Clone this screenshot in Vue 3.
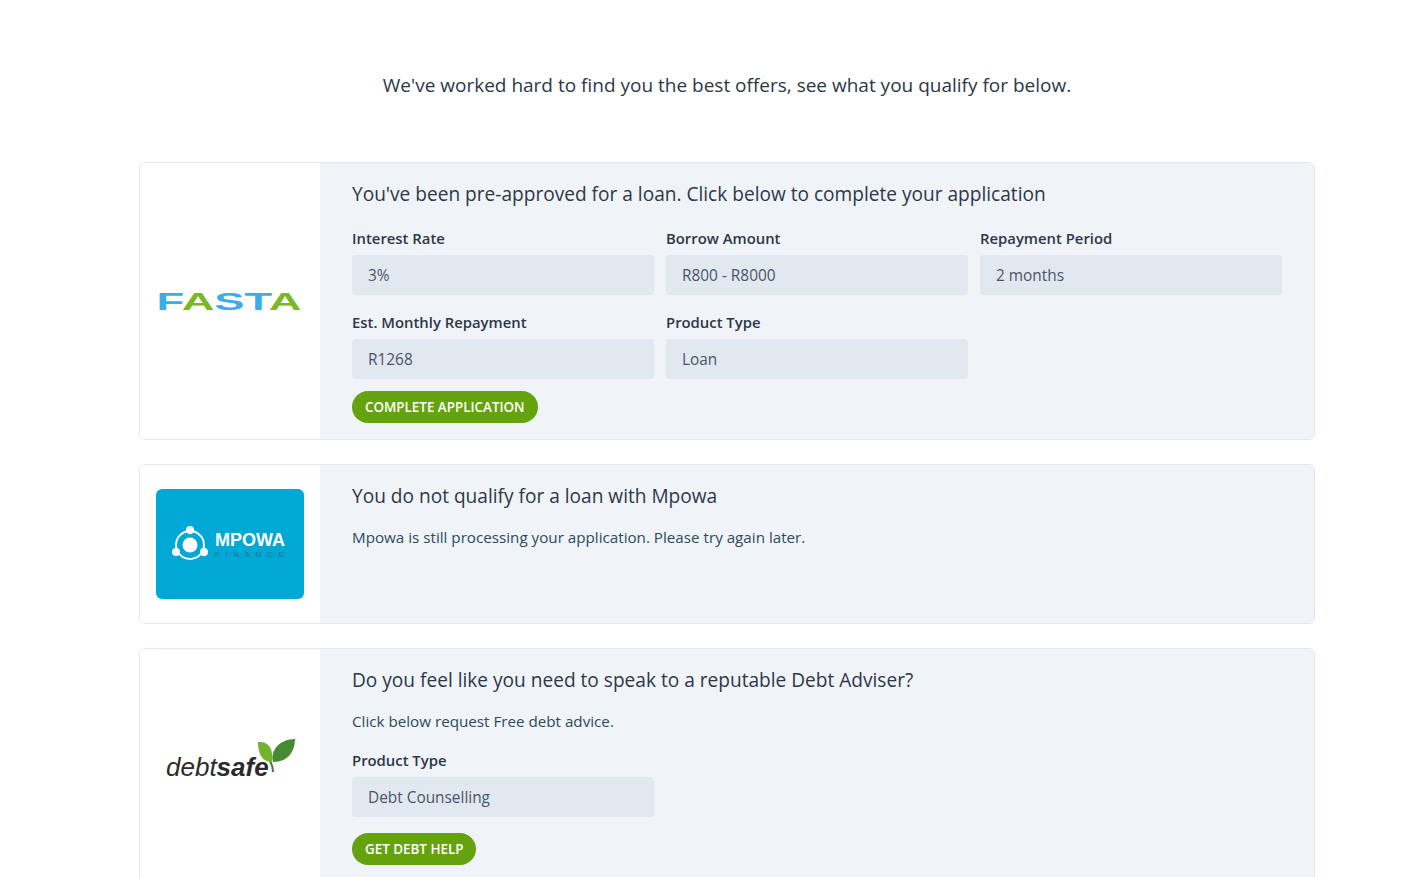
<script setup>
const fasta = [
  { label: 'Interest Rate', value: '3%' },
  { label: 'Borrow Amount', value: 'R800 - R8000' },
  { label: 'Repayment Period', value: '2 months' },
  { label: 'Est. Monthly Repayment', value: 'R1268' },
  { label: 'Product Type', value: 'Loan' },
]
</script>

<template>
  <main class="page">
    <p class="intro">We've worked hard to find you the best offers, see what you qualify for below.</p>

    <section class="card">
      <div class="logo-col">
        <svg class="fasta" width="148" height="26" viewBox="0 0 148 26">
          <text x="0.5" y="22" class="fasta-text" textLength="145" lengthAdjust="spacingAndGlyphs">
            <tspan fill="#3baee9">F</tspan><tspan fill="#7ab827">A</tspan><tspan fill="#3baee9">ST</tspan><tspan fill="#7ab827">A</tspan>
          </text>
        </svg>
      </div>
      <div class="body">
        <h2>You've been pre-approved for a loan. Click below to complete your application</h2>
        <div class="fields">
          <div v-for="f in fasta" :key="f.label" class="field">
            <label>{{ f.label }}</label>
            <div class="value">{{ f.value }}</div>
          </div>
        </div>
        <button class="cta">COMPLETE APPLICATION</button>
      </div>
    </section>

    <section class="card">
      <div class="logo-col">
        <div class="mpowa">
          <svg width="38" height="38" viewBox="0 0 38 38">
            <circle cx="19" cy="20" r="14" fill="none" stroke="#fff" stroke-width="2" />
            <circle cx="19" cy="20" r="7.5" fill="#fff" />
            <circle cx="19" cy="5" r="4" fill="#fff" />
            <circle cx="5" cy="27" r="4" fill="#fff" />
            <circle cx="33" cy="27" r="4" fill="#fff" />
          </svg>
          <div class="mpowa-text">
            <span class="mp-name">MPOWA</span>
            <span class="mp-sub">FINANCE</span>
          </div>
        </div>
      </div>
      <div class="body">
        <h2>You do not qualify for a loan with Mpowa</h2>
        <p class="note">Mpowa is still processing your application. Please try again later.</p>
      </div>
    </section>

    <section class="card">
      <div class="logo-col">
        <div class="debtsafe">
          <span class="ds-text">debt<b>safe</b></span>
          <svg class="leaf" width="38" height="36" viewBox="0 0 38 36">
            <path d="M15 34 C15 28 13 24 10 20" fill="none" stroke="#3f7f2c" stroke-width="2" />
            <path d="M14 24 C3 24 0 14 0 4 C8 3 16 8 14 24 Z" fill="#6fb42c" />
            <path d="M15 24 C12 12 22 1 37 1 C37 12 31 24 15 24 Z" fill="#478a32" />
          </svg>
        </div>
      </div>
      <div class="body">
        <h2>Do you feel like you need to speak to a reputable Debt Adviser?</h2>
        <p class="note">Click below request Free debt advice.</p>
        <div class="fields single">
          <div class="field">
            <label>Product Type</label>
            <div class="value">Debt Counselling</div>
          </div>
        </div>
        <button class="cta tall">GET DEBT HELP</button>
      </div>
    </section>
  </main>
</template>

<style>
html, body { overflow: hidden; background: #fff; }
</style>

<style scoped>
.page {
  box-sizing: border-box;
  width: 1402px;
  height: 877px;
  overflow: hidden;
  padding: 0 87px 0 139px;
  font-family: "Open Sans", "Noto Sans", sans-serif;
  color: #2d3748;
}
.intro {
  margin: 0;
  padding-top: 71px;
  height: 162px;
  box-sizing: border-box;
  text-align: center;
  font-size: 19px;
  line-height: 28px;
}
.card {
  display: flex;
  border: 1px solid #e2e8f0;
  border-radius: 6px;
  overflow: hidden;
  margin-bottom: 24px;
}
.logo-col {
  flex: 0 0 180px;
  background: #fff;
  display: flex;
  align-items: center;
  justify-content: center;
}
.body {
  flex: 1;
  background: #f0f4f9;
  padding: 17px 32px 16px;
  min-height: 125px;
}
h2 {
  margin: 0;
  font-size: 19.1px;
  line-height: 28px;
  font-weight: 400;
}
.fields {
  display: grid;
  grid-template-columns: repeat(3, 302px);
  column-gap: 12px;
  row-gap: 16px;
  margin-top: 19px;
}
.field label {
  display: block;
  font-size: 14.85px;
  line-height: 22px;
  font-weight: 600;
}
.value {
  height: 40px;
  margin-top: 6px;
  padding: 0 16px;
  background: #e2e8f0;
  border-radius: 4px;
  font-size: 15.4px;
  line-height: 42px;
  color: #4a5568;
}
.cta {
  display: block;
  height: 32px;
  margin-top: 12px;
  padding: 0 13px;
  border: 0;
  border-radius: 16px;
  background: #64a30d;
  color: #fff;
  font-family: inherit;
  font-size: 13.4px;
  font-weight: 600;
}
.cta.tall { margin-top: 16px; }
.note {
  margin: 15px 0 0;
  font-size: 15.2px;
  line-height: 24px;
  color: #2c4a5a;
}
.note + .fields { margin-top: 16px; }
.fasta-text {
  font-family: "Liberation Sans", sans-serif;
  font-weight: 700;
  font-size: 24px;
}
.mpowa {
  box-sizing: border-box;
  width: 148px;
  height: 110px;
  padding-left: 15px;
  border-radius: 6px;
  background: #00a8d6;
  display: flex;
  align-items: center;
  gap: 6px;
}
.mpowa-text { display: flex; flex-direction: column; }
.mp-name {
  font-family: "Liberation Sans", sans-serif;
  font-weight: 700;
  font-size: 18px;
  line-height: 20px;
  color: #fff;
}
.mp-sub {
  font-family: "Liberation Sans", sans-serif;
  font-size: 8px;
  line-height: 9px;
  letter-spacing: 5.6px;
  margin-right: -5px;
  color: #2f6f8d;
}
.debtsafe { position: relative; width: 132px; height: 44px; margin-bottom: 10px; }
.ds-text {
  position: absolute;
  left: 2px;
  bottom: 0;
  font-family: "Liberation Sans", sans-serif;
  font-style: italic;
  font-size: 26px;
  line-height: 30px;
  color: #2b2b2b;
}
.ds-text b { font-weight: 700; }
.leaf { position: absolute; right: 0; top: 0; }
</style>
